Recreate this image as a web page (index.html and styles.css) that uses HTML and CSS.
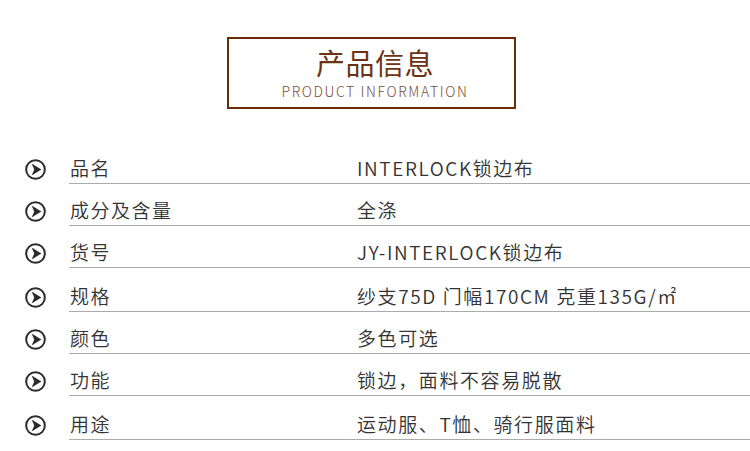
FILE: index.html
```html
<!DOCTYPE html>
<html lang="zh">
<head>
<meta charset="utf-8">
<link rel="stylesheet" href="styles.css">
</head>
<body>
<div class="page">
  <header class="header">
    <div class="title-box">
      <div class="title-cn">产品信息</div>
      <div class="title-en">PRODUCT INFORMATION</div>
    </div>
  </header>
  <div class="list">
    <div class="row">
      <div class="icon"><svg viewBox="0 0 20 20"><circle cx="10" cy="10" r="8.9" fill="none" stroke="#2b2b2b" stroke-width="1.9"/><path d="M6.3 4.3 L15.6 10 L6.3 15.7 L8.8 10 Z" fill="#2b2b2b"/></svg></div>
      <div class="cells"><span class="label">品名</span><span class="value">INTERLOCK锁边布</span></div>
    </div>
    <div class="row">
      <div class="icon"><svg viewBox="0 0 20 20"><circle cx="10" cy="10" r="8.9" fill="none" stroke="#2b2b2b" stroke-width="1.9"/><path d="M6.3 4.3 L15.6 10 L6.3 15.7 L8.8 10 Z" fill="#2b2b2b"/></svg></div>
      <div class="cells"><span class="label">成分及含量</span><span class="value">全涤</span></div>
    </div>
    <div class="row">
      <div class="icon"><svg viewBox="0 0 20 20"><circle cx="10" cy="10" r="8.9" fill="none" stroke="#2b2b2b" stroke-width="1.9"/><path d="M6.3 4.3 L15.6 10 L6.3 15.7 L8.8 10 Z" fill="#2b2b2b"/></svg></div>
      <div class="cells"><span class="label">货号</span><span class="value">JY-INTERLOCK锁边布</span></div>
    </div>
    <div class="row row-tall">
      <div class="icon"><svg viewBox="0 0 20 20"><circle cx="10" cy="10" r="8.9" fill="none" stroke="#2b2b2b" stroke-width="1.9"/><path d="M6.3 4.3 L15.6 10 L6.3 15.7 L8.8 10 Z" fill="#2b2b2b"/></svg></div>
      <div class="cells"><span class="label">规格</span><span class="value">纱支75D 门幅170CM 克重135G/㎡</span></div>
    </div>
    <div class="row">
      <div class="icon"><svg viewBox="0 0 20 20"><circle cx="10" cy="10" r="8.9" fill="none" stroke="#2b2b2b" stroke-width="1.9"/><path d="M6.3 4.3 L15.6 10 L6.3 15.7 L8.8 10 Z" fill="#2b2b2b"/></svg></div>
      <div class="cells"><span class="label">颜色</span><span class="value">多色可选</span></div>
    </div>
    <div class="row">
      <div class="icon"><svg viewBox="0 0 20 20"><circle cx="10" cy="10" r="8.9" fill="none" stroke="#2b2b2b" stroke-width="1.9"/><path d="M6.3 4.3 L15.6 10 L6.3 15.7 L8.8 10 Z" fill="#2b2b2b"/></svg></div>
      <div class="cells"><span class="label">功能</span><span class="value">锁边，面料不容易脱散</span></div>
    </div>
    <div class="row row-tall">
      <div class="icon"><svg viewBox="0 0 20 20"><circle cx="10" cy="10" r="8.9" fill="none" stroke="#2b2b2b" stroke-width="1.9"/><path d="M6.3 4.3 L15.6 10 L6.3 15.7 L8.8 10 Z" fill="#2b2b2b"/></svg></div>
      <div class="cells"><span class="label">用途</span><span class="value">运动服、T恤、骑行服面料</span></div>
    </div>
  </div>
</div>
</body>
</html>
```
FILE: styles.css
```css
html, body {
  margin: 0;
  padding: 0;
  background: #ffffff;
}
body {
  font-family: "Noto Sans CJK SC", "Noto Sans", sans-serif;
  color: #333333;
}
.page {
  width: 750px;
  height: 451px;
  overflow: hidden;
}
.header {
  display: flex;
  padding: 37px 0 0 227px;
}
.title-box {
  box-sizing: border-box;
  width: 289px;
  height: 72px;
  border: 2px solid #6a2c08;
  padding: 3px 0 0 7px;
  display: flex;
  flex-direction: column;
  align-items: center;
}
.title-cn {
  font-size: 29px;
  line-height: 40px;
  color: #6b3314;
  letter-spacing: 0.5px;
}
.title-en {
  font-size: 14px;
  line-height: 18px;
  letter-spacing: 1.6px;
  color: #7a4c38;
  font-weight: 300;
}
.list {
  margin-top: 33px;
  display: flex;
  flex-direction: column;
}
.row {
  height: 42px;
  display: flex;
  align-items: flex-end;
}
.row-tall {
  height: 44px;
}
.icon {
  flex: none;
  width: 69px;
  box-sizing: border-box;
  padding: 0 0 4px 25px;
  display: flex;
}
.icon svg {
  display: block;
  flex: none;
  width: 21px;
  height: 21px;
}
.cells {
  flex: 1;
  display: flex;
  align-items: center;
  border-bottom: 1px solid #ababab;
  padding-bottom: 3px;
  font-size: 19px;
  line-height: 24px;
  font-weight: 350;
}
.label {
  width: 287px;
  flex: none;
  padding-left: 1px;
  letter-spacing: 1.5px;
}
.value {
  letter-spacing: 1.6px;
}
```
